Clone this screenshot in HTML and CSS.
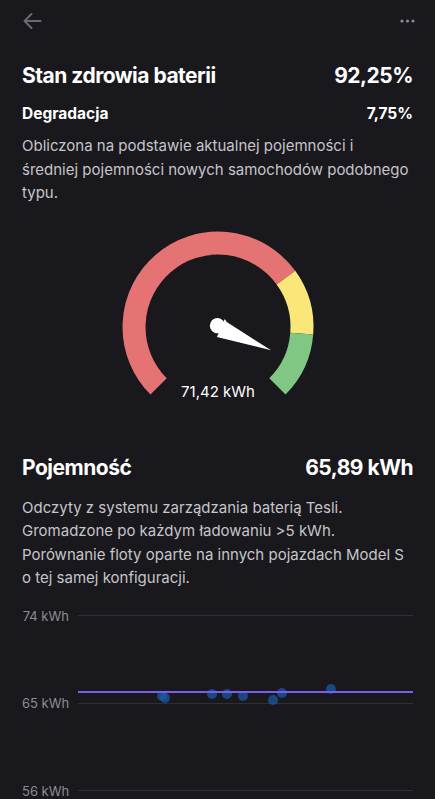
FILE: index.html
```html
<!DOCTYPE html>
<html lang="pl">
<head>
    <meta charset="UTF-8">
    <meta name="viewport" content="width=device-width, initial-scale=1.0">
    <title>Stan zdrowia baterii</title>
    <link rel="stylesheet" href="styles.css">
</head>
<body>
    <header class="topbar">
        <svg class="icon-back" width="20" height="18" viewBox="0 0 20 18">
            <path d="M18.5 9H2.5M9.5 2L2.5 9L9.5 16"/>
        </svg>
        <svg class="icon-more" width="15" height="4" viewBox="0 0 15 4">
            <circle cx="2" cy="2" r="1.6"/>
            <circle cx="7.5" cy="2" r="1.6"/>
            <circle cx="13" cy="2" r="1.6"/>
        </svg>
    </header>

    <section class="summary">
        <div class="row row-title">
            <h1>Stan zdrowia baterii</h1>
            <span class="value">92,25%</span>
        </div>
        <div class="row row-sub">
            <h2>Degradacja</h2>
            <span class="value">7,75%</span>
        </div>
        <p class="note">Obliczona na podstawie aktualnej pojemności i średniej pojemności nowych samochodów podobnego typu.</p>
    </section>

    <div class="gauge">
        <svg width="200" height="180" viewBox="0 0 200 180">
            <!-- 70% czerwony, 15% żółty, 15% zielony -->
            <path class="arc arc-red" d="M40.60 159.40A84 84 0 1 1 167.96 50.62"/>
            <path class="arc arc-yellow" d="M167.96 50.62A84 84 0 0 1 183.74 106.59"/>
            <path class="arc arc-green" d="M183.74 106.59A84 84 0 0 1 159.40 159.40"/>
            <g class="needle" transform="translate(100 100) rotate(23.7)">
                <circle cx="-1" cy="-1" r="7.6"/>
                <polygon points="3,-10 6,-8 58,0 3,9.5"/>
            </g>
            <text class="gauge-value" x="100" y="170" text-anchor="middle">71,42 kWh</text>
        </svg>
    </div>

    <section class="capacity">
        <div class="row row-title">
            <h1>Pojemność</h1>
            <span class="value">65,89 kWh</span>
        </div>
        <p class="note">Odczyty z systemu zarządzania baterią Tesli. Gromadzone po każdym ładowaniu &gt;5 kWh. Porównanie floty oparte na innych pojazdach Model S o tej samej konfiguracji.</p>
    </section>

    <div class="chart">
        <div class="chart-row"><span class="chart-label">74 kWh</span><span class="chart-line"></span></div>
        <div class="chart-row"><span class="chart-label">65 kWh</span><span class="chart-line"></span></div>
        <div class="chart-row"><span class="chart-label">56 kWh</span><span class="chart-line"></span></div>

        <svg class="chart-plot" width="335" height="175">
            <g class="points">
                <circle cx="84" cy="80" r="5"/>
                <circle cx="87" cy="82" r="5"/>
                <circle cx="134" cy="78" r="5"/>
                <circle cx="149" cy="78" r="5"/>
                <circle cx="165" cy="80" r="5"/>
                <circle cx="195" cy="84" r="5"/>
                <circle cx="204" cy="77" r="5"/>
                <circle cx="253" cy="73" r="5"/>
            </g>
            <line class="fleet" x1="0" y1="76" x2="335" y2="76"/>
        </svg>
    </div>
</body>
</html>
```

FILE: styles.css
```css
body {
    margin: 0;
    padding: 0 22px;
    background-color: #19181d;
    color: #fff;
    font-family: Inter, "Noto Sans", sans-serif;
    overflow: hidden;
}
.topbar {
    height: 42px;
    display: flex;
    align-items: center;
    justify-content: space-between;
}
.icon-back {
    fill: none;
    stroke: #6b6a70;
    stroke-width: 2;
    stroke-linecap: round;
    stroke-linejoin: round;
}
.icon-more {
    fill: #8a898f;
    margin-right: -2px;
}
.row {
    display: flex;
    justify-content: space-between;
    align-items: center;
}
.row-title {
    height: 26px;
    font-size: 21px;
    font-weight: 700;
    letter-spacing: -0.5px;
}
.row-title h1 {
    margin: 0;
    font-size: inherit;
}
.row-sub {
    height: 20px;
    margin-top: 15px;
    font-size: 15.5px;
    font-weight: 700;
}
.row-sub h2 {
    margin: 0;
    font-size: inherit;
}
.summary {
    margin-top: 20px;
}
.note {
    margin: 11px 0 0;
    font-size: 15px;
    line-height: 23.5px;
    color: #c6c5ca;
}
.capacity .note {
    margin-top: 15px;
}
.gauge {
    display: flex;
    justify-content: center;
    margin-top: 22px;
}
.gauge svg {
    display: block;
}
.arc {
    fill: none;
    stroke-width: 23;
}
.arc-red {
    stroke: #e57373;
}
.arc-yellow {
    stroke: #fbe67a;
}
.arc-green {
    stroke: #81c784;
}
.needle {
    fill: #fff;
}
.gauge-value {
    fill: #fff;
    font-size: 15px;
}
.capacity {
    margin-top: 48px;
}
.chart {
    position: relative;
    margin-top: 18px;
    height: 191px;
    display: flex;
    flex-direction: column;
    justify-content: space-between;
}
.chart-row {
    display: flex;
    align-items: center;
    gap: 9px;
    height: 16px;
}
.chart-label {
    width: 47px;
    text-align: right;
    white-space: nowrap;
    font-size: 13px;
    color: #8d8c92;
}
.chart-line {
    flex: 1;
    height: 1px;
    background-color: #302f35;
}
.chart-plot {
    position: absolute;
    left: 56px;
    top: 8px;
}
.points circle {
    fill: #1d5bab;
    opacity: 0.7;
}
.fleet {
    stroke: #7a5cf0;
    stroke-width: 2;
}
```
